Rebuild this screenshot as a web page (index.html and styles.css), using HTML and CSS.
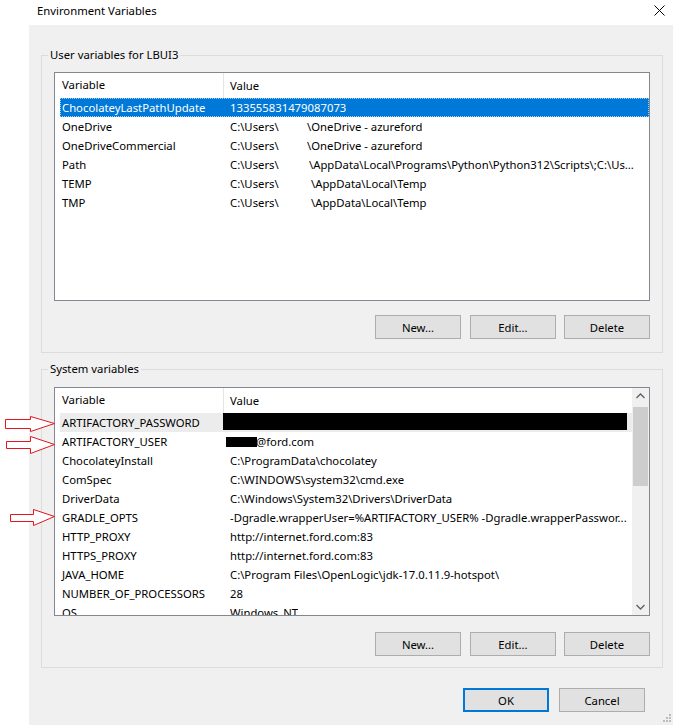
FILE: index.html
```html
<!DOCTYPE html>
<html lang="en">
<head>
  <meta charset="UTF-8" />
  <title>Environment Variables</title>
  <link rel="stylesheet" href="styles.css">
</head>
<body>

<div class="titlebar">
  <span class="title">Environment Variables</span>
  <span class="close">
    <svg width="11" height="11" viewBox="0 0 11 11"><path d="M0.5 0.5 L10.5 10.5 M10.5 0.5 L0.5 10.5" stroke="#000" stroke-width="1" fill="none"/></svg>
  </span>
</div>

<div class="dialog">

  <!-- User variables -->
  <fieldset class="group group-user">
    <legend>User variables for LBUI3</legend>
    <div class="listbox">
      <div class="list-head">
        <span class="col-name">Variable</span>
        <span class="col-value">Value</span>
      </div>
      <div class="row selected"><span class="col-name">ChocolateyLastPathUpdate</span><span class="col-value">133555831479087073</span></div>
      <div class="row"><span class="col-name">OneDrive</span><span class="col-value"><span class="cut cut-a">C:\Users\</span>\OneDrive - azureford</span></div>
      <div class="row"><span class="col-name">OneDriveCommercial</span><span class="col-value"><span class="cut cut-a">C:\Users\</span>\OneDrive - azureford</span></div>
      <div class="row"><span class="col-name">Path</span><span class="col-value"><span class="cut cut-b">C:\Users\</span>\AppData\Local\Programs\Python\Python312\Scripts\;C:\Us...</span></div>
      <div class="row"><span class="col-name">TEMP</span><span class="col-value"><span class="cut cut-c">C:\Users\</span>\AppData\Local\Temp</span></div>
      <div class="row"><span class="col-name">TMP</span><span class="col-value"><span class="cut cut-c">C:\Users\</span>\AppData\Local\Temp</span></div>
    </div>
    <div class="buttons">
      <button>New...</button>
      <button class="mid">Edit...</button>
      <button>Delete</button>
    </div>
  </fieldset>

  <!-- System variables -->
  <fieldset class="group group-sys">
    <legend>System variables</legend>
    <div class="listbox">
      <div class="list-main">
        <div class="list-head">
          <span class="col-name">Variable</span>
          <span class="col-value">Value</span>
        </div>
        <div class="row inactive"><span class="col-name">ARTIFACTORY_PASSWORD</span><span class="col-value col-redact"><span class="redact-bar"></span></span></div>
        <div class="row"><span class="col-name">ARTIFACTORY_USER</span><span class="col-value col-user"><span class="redact-user"></span>@ford.com</span></div>
        <div class="row"><span class="col-name">ChocolateyInstall</span><span class="col-value">C:\ProgramData\chocolatey</span></div>
        <div class="row"><span class="col-name">ComSpec</span><span class="col-value">C:\WINDOWS\system32\cmd.exe</span></div>
        <div class="row"><span class="col-name">DriverData</span><span class="col-value">C:\Windows\System32\Drivers\DriverData</span></div>
        <div class="row"><span class="col-name">GRADLE_OPTS</span><span class="col-value">-Dgradle.wrapperUser=%ARTIFACTORY_USER% -Dgradle.wrapperPasswor...</span></div>
        <div class="row"><span class="col-name">HTTP_PROXY</span><span class="col-value">http://internet.ford.com:83</span></div>
        <div class="row"><span class="col-name">HTTPS_PROXY</span><span class="col-value">http://internet.ford.com:83</span></div>
        <div class="row"><span class="col-name">JAVA_HOME</span><span class="col-value">C:\Program Files\OpenLogic\jdk-17.0.11.9-hotspot\</span></div>
        <div class="row"><span class="col-name">NUMBER_OF_PROCESSORS</span><span class="col-value">28</span></div>
        <div class="row"><span class="col-name">OS</span><span class="col-value">Windows_NT</span></div>
      </div>
      <div class="scrollbar">
        <div class="sb-btn">
          <svg width="17" height="17" viewBox="0 0 17 17"><path d="M4.5 10 L8.5 6 L12.5 10" stroke="#606060" stroke-width="1.3" fill="none"/></svg>
        </div>
        <div class="sb-track"><div class="sb-thumb"></div></div>
        <div class="sb-btn">
          <svg width="17" height="17" viewBox="0 0 17 17"><path d="M4.5 7 L8.5 11 L12.5 7" stroke="#606060" stroke-width="1.3" fill="none"/></svg>
        </div>
      </div>
    </div>
    <div class="buttons">
      <button>New...</button>
      <button class="mid">Edit...</button>
      <button>Delete</button>
    </div>
  </fieldset>

  <div class="footer">
    <button class="default">OK</button>
    <button>Cancel</button>
  </div>
</div>

<!-- red markers drawn on top of the screenshot -->
<svg class="markers" width="60" height="130" viewBox="0 0 60 130">
  <polygon points="5.5,19.5 30.5,19.5 30.5,16.5 54.5,23.5 30.5,31.5 30.5,28.5 5.5,28.5" fill="#fff" stroke="#e3161e" stroke-width="1"/>
  <polygon points="6.5,41.5 30.5,41.5 30.5,36.5 54.5,44.5 30.5,53.5 30.5,48.5 6.5,48.5" fill="#fff" stroke="#e3161e" stroke-width="1"/>
  <polygon points="10.5,114.5 33.5,114.5 33.5,109.5 54.5,116.5 33.5,125.5 33.5,121.5 10.5,121.5" fill="#fff" stroke="#e3161e" stroke-width="1"/>
</svg>

<svg class="grip" width="10" height="10" viewBox="0 0 10 10">
  <rect x="7" y="1" width="2" height="2" fill="#bcbcbc"/>
  <rect x="4" y="4" width="2" height="2" fill="#bcbcbc"/>
  <rect x="7" y="4" width="2" height="2" fill="#bcbcbc"/>
  <rect x="1" y="7" width="2" height="2" fill="#bcbcbc"/>
  <rect x="4" y="7" width="2" height="2" fill="#bcbcbc"/>
  <rect x="7" y="7" width="2" height="2" fill="#bcbcbc"/>
</svg>

</body>
</html>
```

FILE: styles.css
```css
body {
  margin: 0;
  width: 673px;
  height: 725px;
  overflow: hidden;
  position: relative;
  background-color: #fff;
  font-family: "Segoe UI", "Noto Sans", "Liberation Sans", sans-serif;
  font-size: 11.3px;
  color: #000;
}

.titlebar {
  height: 25px;
  box-sizing: border-box;
  padding: 3px 8px 0 37px;
  display: flex;
  justify-content: space-between;
  align-items: flex-start;
  line-height: 16px;
}

.close svg {
  display: block;
  margin-top: 2px;
}

.dialog {
  margin-left: 29px;
  height: 700px;
  box-sizing: border-box;
  padding: 23px 10px 0 12px;
  background-color: #f0f0f0;
}

fieldset.group {
  margin: 0;
  min-width: 0;
  border: 1px solid #dcdcdc;
  padding: 10px 12px 13px;
}

fieldset.group legend {
  padding: 0 2px;
  margin-left: -6px;
  line-height: 14px;
}

.group-sys {
  margin-top: 9px !important;
  padding-top: 11px !important;
  padding-bottom: 11px !important;
}

.listbox {
  height: 229px;
  box-sizing: border-box;
  border: 1px solid #828790;
  background-color: #fff;
  overflow: hidden;
}

.group-sys .listbox {
  display: flex;
}

.list-main {
  flex: 1;
  min-width: 0;
  overflow: hidden;
}

.list-head {
  display: flex;
  height: 25px;
  line-height: 25px;
}

.list-head .col-name {
  width: 169px;
  box-sizing: border-box;
  padding-left: 7px;
  border-right: 1px solid #e5e5e5;
  line-height: 24px;
}

.list-head .col-value {
  padding-left: 6px;
}

.row {
  display: flex;
  height: 19px;
  line-height: 19px;
  margin-left: 5px;
  white-space: nowrap;
}

.row .col-name {
  width: 164px;
  flex-shrink: 0;
  box-sizing: border-box;
  padding-left: 2px;
}

.row .col-value {
  padding-left: 6px;
  overflow: hidden;
}

.row.selected {
  background-color: #0078d7;
  color: #fff;
  outline: 1px dotted #9fcdf3;
  outline-offset: -1px;
}

.row.inactive {
  background-color: #ececec;
}

.cut {
  display: inline-block;
}

.cut-a { width: 77px; }
.cut-b { width: 79px; }
.cut-c { width: 81px; }

.col-redact {
  padding-left: 0 !important;
  margin-left: -1px;
}

.redact-bar {
  display: block;
  width: 404px;
  height: 17px;
  background-color: #000;
}

.redact-user {
  display: inline-block;
  width: 31px;
  height: 10px;
  margin-left: -4px;
  margin-right: -1px;
  vertical-align: -1px;
  background-color: #000;
}

.scrollbar {
  width: 17px;
  flex-shrink: 0;
  display: flex;
  flex-direction: column;
  background-color: #f0f0f0;
}

.sb-btn {
  height: 17px;
}

.sb-btn svg {
  display: block;
}

.sb-track {
  flex: 1;
  padding: 2px 1px;
}

.sb-thumb {
  height: 79px;
  background-color: #cdcdcd;
}

.buttons {
  display: flex;
  justify-content: flex-end;
  gap: 8px;
  margin-top: 14px;
}

.group-sys .buttons {
  margin-top: 16px;
}

.buttons .mid {
  margin-left: 1px;
}

button {
  width: 86px;
  height: 24px;
  margin: 0;
  padding: 0;
  background-color: #e1e1e1;
  border: 1px solid #adadad;
  font: inherit;
  color: #000;
}

button.default {
  border: 2px solid #0078d7;
}

.footer {
  display: flex;
  justify-content: flex-end;
  gap: 10px;
  margin-top: 20px;
  padding-right: 18px;
}

.markers {
  position: absolute;
  left: 0;
  top: 400px;
}

.grip {
  position: absolute;
  right: 1px;
  bottom: 2px;
}
```
